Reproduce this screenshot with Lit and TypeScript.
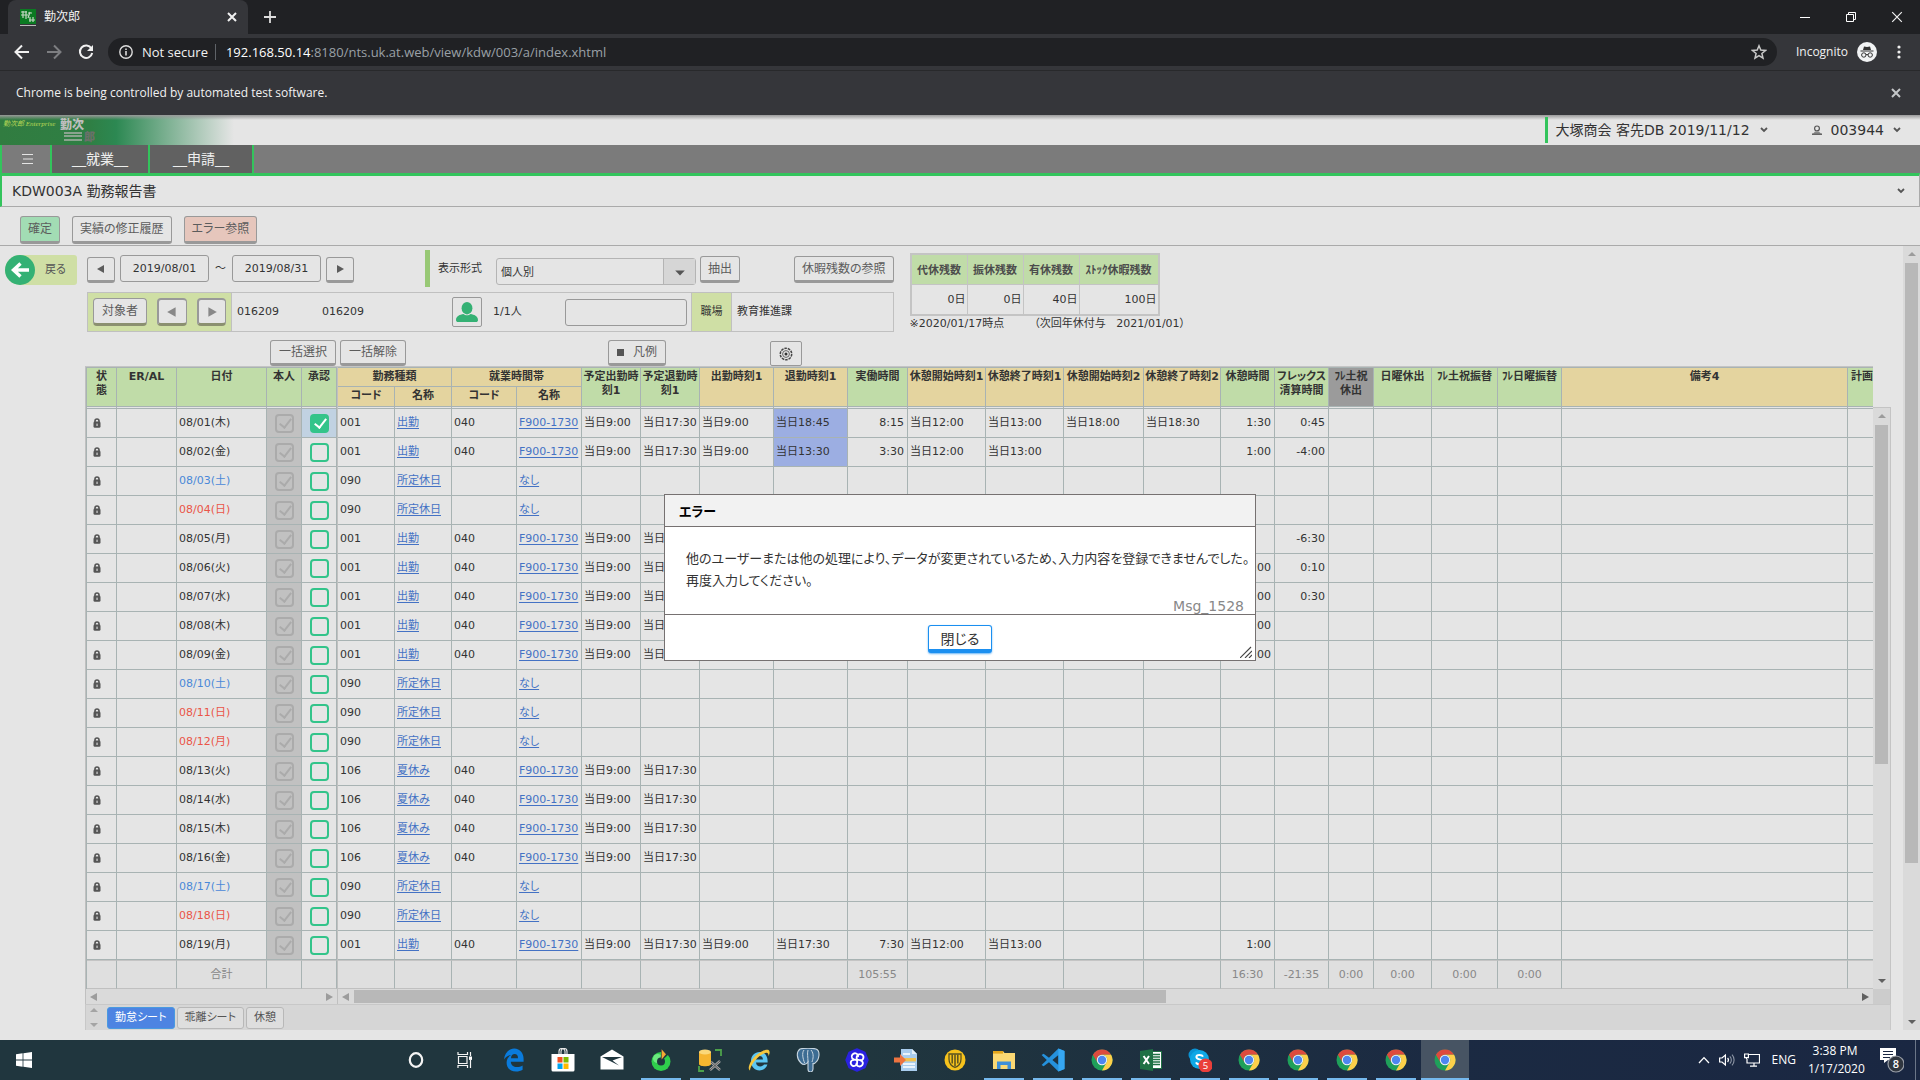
import { LitElement, html, css, svg, nothing } from "lit";
import { customElement } from "lit/decorators.js";
import { classMap } from "lit/directives/class-map.js";

type Col = { key: string; label: string; tone: "g" | "y" | "x"; align?: "r" };
type Day = { date: string; kind?: "sat" | "sun"; approved?: boolean; cells: Record<string, string> };

const PLAN: Col[] = [
  { key: "planIn", label: "予定出勤時刻1", tone: "g" },
  { key: "planOut", label: "予定退勤時刻1", tone: "g" },
  { key: "in1", label: "出勤時刻1", tone: "y" },
  { key: "out1", label: "退勤時刻1", tone: "y" },
  { key: "worked", label: "実働時間", tone: "g", align: "r" },
  { key: "bs1", label: "休憩開始時刻1", tone: "y" },
  { key: "be1", label: "休憩終了時刻1", tone: "y" },
  { key: "bs2", label: "休憩開始時刻2", tone: "y" },
  { key: "be2", label: "休憩終了時刻2", tone: "y" },
  { key: "brk", label: "休憩時間", tone: "g", align: "r" },
  { key: "flex", label: "フレックス清算時間", tone: "g", align: "r" },
  { key: "f1", label: "ﾌﾚ土祝休出", tone: "x" },
  { key: "f2", label: "日曜休出", tone: "g" },
  { key: "f3", label: "ﾌﾚ土祝振替", tone: "g" },
  { key: "f4", label: "ﾌﾚ日曜振替", tone: "g" },
  { key: "note", label: "備考4", tone: "y" },
  { key: "plan", label: "計画", tone: "g" },
];
/* Widths of the detail pane, code and name columns first. */
const WIDTHS = [57, 57, 65, 65, 59, 59, 74, 74, 60, 78, 78, 80, 77, 54, 54, 45, 58, 66, 64, 286, 60];

const TOTALS: Record<string, string> = {
  worked: "105:55", brk: "16:30", flex: "-21:35", f1: "0:00", f2: "0:00", f3: "0:00", f4: "0:00",
};

const work = (extra: Record<string, string> = {}) => ({
  code: "001", name: "出勤", zone: "040", zoneName: "F900-1730", planIn: "当日9:00", planOut: "当日17:30", ...extra,
});
const off = { code: "090", name: "所定休日", zoneName: "なし" };
const summer = { ...work(), code: "106", name: "夏休み" };

const DAYS: Day[] = [
  { date: "08/01(木)", approved: true, cells: work({ in1: "当日9:00", out1: "当日18:45", worked: "8:15", bs1: "当日12:00", be1: "当日13:00", bs2: "当日18:00", be2: "当日18:30", brk: "1:30", flex: "0:45" }) },
  { date: "08/02(金)", cells: work({ in1: "当日9:00", out1: "当日13:30", worked: "3:30", bs1: "当日12:00", be1: "当日13:00", brk: "1:00", flex: "-4:00" }) },
  { date: "08/03(土)", kind: "sat", cells: off },
  { date: "08/04(日)", kind: "sun", cells: off },
  { date: "08/05(月)", cells: work({ flex: "-6:30" }) },
  { date: "08/06(火)", cells: work({ brk: "1:00", flex: "0:10" }) },
  { date: "08/07(水)", cells: work({ brk: "1:00", flex: "0:30" }) },
  { date: "08/08(木)", cells: work({ brk: "1:00" }) },
  { date: "08/09(金)", cells: work({ brk: "1:00" }) },
  { date: "08/10(土)", kind: "sat", cells: off },
  { date: "08/11(日)", kind: "sun", cells: off },
  { date: "08/12(月)", kind: "sun", cells: off },
  { date: "08/13(火)", cells: summer },
  { date: "08/14(水)", cells: summer },
  { date: "08/15(木)", cells: summer },
  { date: "08/16(金)", cells: summer },
  { date: "08/17(土)", kind: "sat", cells: off },
  { date: "08/18(日)", kind: "sun", cells: off },
  { date: "08/19(月)", cells: work({ in1: "当日9:00", out1: "当日17:30", worked: "7:30", bs1: "当日12:00", be1: "当日13:00", brk: "1:00" }) },
];

const icon = (w: number, h: number, body: unknown, vb = `0 0 ${w} ${h}`) =>
  html`<svg class="ic" width=${w} height=${h} viewBox=${vb} aria-hidden="true">${body}</svg>`;

const cross = (s: number, sw = 2) =>
  icon(s, s, svg`<path d="M1 1L9 9M9 1L1 9" stroke="currentColor" stroke-width=${sw} fill="none"/>`, "0 0 10 10");
const chevron = () =>
  icon(8, 6, svg`<path d="M1 1L4 4L7 1" stroke="#555" stroke-width="1.8" fill="none"/>`);
const tri = (dir: string, s = 10, color = "currentColor") => {
  const d: Record<string, string> = {
    left: "M8 1V9L1 5Z", right: "M2 1V9L9 5Z", up: "M1 7H9L5 3Z", down: "M1 3H9L5 7Z",
  };
  return icon(s, s, svg`<path d=${d[dir]} fill=${color}/>`, "0 0 10 10");
};
const lock = () =>
  icon(8, 10, svg`<path d="M2 4V3a2 2 0 0 1 4 0v1" stroke="#555" stroke-width="1.6" fill="none"/><rect x="0.5" y="3.6" width="7" height="6.2" rx="1.4" fill="#555"/><rect x="3.4" y="5.6" width="1.3" height="2.4" fill="#ccc"/>`);

const chrome = svg`<circle cx="12" cy="12" r="10.5" fill="#1fa05a"/><path d="M2.9 6.75A10.5 10.5 0 0 1 21.1 6.75H12A5.25 5.25 0 0 0 7.45 14.6Z" fill="#dd4b3e"/><path d="M21.1 6.75A10.5 10.5 0 0 1 12 22.5L16.55 14.6A5.25 5.25 0 0 0 12 6.75Z" fill="#fdd04a"/><circle cx="12" cy="12" r="5.2" fill="#f4f4f4"/><circle cx="12" cy="12" r="4.2" fill="#4d86f0"/>`;

const TASKS: { name: string; art: unknown; open?: boolean; active?: boolean }[] = [
  { name: "Cortana", art: svg`<ellipse cx="12" cy="12" rx="6.2" ry="6.8" fill="none" stroke="#f4f4f4" stroke-width="2.2"/>` },
  { name: "Task View", art: svg`<path d="M5 4V6.5H14.5V4M5 20V17.5H14.5V20M5.5 8.5H14V15.5H5.5ZM17.5 4V8M17.5 12V20" fill="none" stroke="#f4f4f4" stroke-width="1.2"/><rect x="16" y="8.5" width="3" height="3.4" fill="#fff"/>` },
  { name: "Edge", art: svg`<path d="M2 11.5C2.6 5.5 6.6 .5 12.2 .5C18.3 .5 21.6 5.6 21.6 10.8V13.8H8.8C9 17.4 11.6 19 14.8 19C17 19 19 18.4 20.6 17.4V21.8C18.8 23 16.6 23.6 14 23.6C8 23.6 4.6 19.6 4.6 14.8C4.6 11.4 6.2 8.6 9 7C6 7.4 3.6 9 2 11.5ZM9 10.2H16C16 7.4 14.8 6 12.6 6C10.6 6 9.2 7.4 9 10.2Z" fill="#0a7bdc"/>` },
  { name: "Store", art: svg`<path d="M8 6.5V3.5A3 3 0 0 1 14 3.5V6.5M10 6.5V3.5A3 3 0 0 1 16 3.5V6.5" fill="none" stroke="#e8e8e8" stroke-width="1.1"/><path d="M0.5 6H23.5V22A1.5 1.5 0 0 1 22 23.5H2A1.5 1.5 0 0 1 .5 22Z" fill="#fff"/><rect x="6.5" y="9" width="5" height="5.5" fill="#f25022"/><rect x="12.5" y="9" width="5" height="5.5" fill="#7fba00"/><rect x="6.5" y="15.5" width="5" height="5.5" fill="#00a4ef"/><rect x="12.5" y="15.5" width="5" height="5.5" fill="#ffb900"/>` },
  { name: "Mail", art: svg`<path d="M0.5 8.5L12 1.5L23.5 8.5V21.5H.5Z" fill="#fff"/><path d="M2 9H22L12.5 12.5L19 17.5Z" fill="#20363e"/>` },
  { name: "Power agent", open: true, art: svg`<circle cx="12" cy="13.5" r="9.5" fill="#2fcf4c"/><circle cx="8.6" cy="10.6" r="4.6" fill="#86f296" opacity=".7"/><circle cx="12" cy="13.5" r="4" fill="#20363e"/><path d="M11.4 14L12.4 2L20.5 5.5Z" fill="#20363e"/><path d="M12.6 11.5V1.2L17 6.2Z" fill="#f5a934"/>` },
  { name: "Database tool", open: true, art: svg`<path d="M1 4V16C1 19 13 19 13 16V4Z" fill="#f6b52f"/><ellipse cx="7" cy="4" rx="6" ry="2.4" fill="#fbd878"/><path d="M17 2H23V8M1 18V23H6" stroke="#4da24b" stroke-width="1.8" fill="none"/><path d="M12 22L22 13M13 14L22 22" stroke="#a8a8a8" stroke-width="2.4"/><path d="M12 22L22 13M13 14L22 22" stroke="#555" stroke-width="1"/>` },
  { name: "Internet Explorer", art: svg`<path d="M4 13C4 7.6 7.8 4 12.6 4C17.6 4 20.6 8 20.6 13V14.4H9C9.2 17 11 18.4 13.4 18.4C15 18.4 16.2 17.8 17 16.6H20.4C19.2 20.4 16.4 22.4 12.6 22.4C7.6 22.4 4 18.8 4 13ZM9 11.4H16C15.8 9.2 14.6 8 12.6 8C10.6 8 9.2 9.2 9 11.4Z" fill="#5cc6f2"/><path d="M3 22.5C-1 20 5 9 13 4.4C17.6 1.6 22.4 .6 22.6 4C22.8 5.4 22 7.2 21.4 8.2C21.8 5.4 20.6 4 17 5.4C10.4 8 3 17.6 3 22.5Z" fill="#f5c63c"/>` },
  { name: "PostgreSQL", art: svg`<path d="M4 1C8 -.2 16 -.2 20 1C25 3 23 12 19.4 14.6C18 16 17.4 16 17 15V21C16.6 25 12 25 12 21V14C10 17 7 17 5 15C.6 11 0 4 4 1Z" fill="#3d6c93" stroke="#c8d6e0" stroke-width="1.1"/><path d="M8 2C5.6 5 7 11 8.6 15M15 2C18.4 6 17 11 16 14M12 14C12 9 11 6 12 2" stroke="#c8d6e0" stroke-width="1" fill="none"/>` },
  { name: "Swirl", art: svg`<path d="M12 1L20 4.5L23 12L20 19.5L12 23L4 19.5L1 12L4 4.5Z" fill="#2a22e0" stroke="#2a22e0" stroke-width="1.4" stroke-linejoin="round"/><g fill="none" stroke="#fff" stroke-width="1.8"><path d="M12 12C7 12 5.6 9 7.4 6.6C9.6 4 13.6 5.4 13 9"/><path d="M12 12C10.6 7.4 14 5 17 6.6C19.6 8.4 18.6 12.4 15 12.4"/><path d="M12 12C17 11.4 19 14.6 17.2 17.2C15 19.6 11 18.4 11.6 14.8"/><path d="M12 12C13 17 10 19 7.2 17.6C4.6 15.6 5.6 11.6 9.2 11.8"/></g>` },
  { name: "Export", art: svg`<path d="M7 1H18L23 6V23H7Z" fill="#a9cdee"/><path d="M18 1V6H23Z" fill="#e6f1fa"/><path d="M9 16H21M9 19H21M9 6H16" stroke="#fff" stroke-width="1.4"/><rect x="9" y="10" width="13" height="3.4" fill="#f2c14d"/><path d="M0 9.5H6V6L12 12L6 18V14.5H0Z" fill="#ee7440"/>` },
  { name: "Shield", art: svg`<circle cx="12" cy="12" r="10.5" fill="#f6c21c"/><path d="M6 6H18V11C18 15 16 18 12 19.5C8 18 6 15 6 11Z" fill="#f6c21c" stroke="#5a5220" stroke-width="1.3"/><path d="M9.2 6.5V15.6M12 6.5V18.6M14.8 6.5V15.6" stroke="#5a5220" stroke-width="1.5"/>` },
  { name: "Explorer", open: true, art: svg`<path d="M1 3H11L12.5 5H23V21H1Z" fill="#fbd873"/><path d="M1 3H11V5.6H1Z" fill="#e3a51c"/><path d="M5 21V13.5H19V21H15.5V17H8.5V21Z" fill="#3f8fd8"/>` },
  { name: "VS Code", open: true, art: svg`<path d="M17.4 .5L23.5 3V21L17.4 23.5L8 14.2L2.6 18.2L.6 17L5.8 12L.6 7L2.6 5.8L8 9.8ZM17.4 7L11.4 12L17.4 17Z" fill="#2591dc" fill-rule="evenodd"/><path d="M17.4 .5L23.5 3V21L17.4 23.5Z" fill="#36a7f2"/>` },
  { name: "Chrome", open: true, art: chrome },
  { name: "Excel", open: true, art: svg`<rect x="11" y="3.5" width="11.5" height="17" fill="#fff" stroke="#1f7145"/><path d="M14 6.5H21M14 9H21M14 11.5H21M14 14H21M14 16.5H21" stroke="#1f7145" stroke-width="1.3"/><path d="M1 3L14 1V23L1 21Z" fill="#1f7145"/><path d="M4.6 8L10 16M10 8L4.6 16" stroke="#fff" stroke-width="2"/>` },
  { name: "Skype", open: true, art: svg`<circle cx="7" cy="7" r="6.5" fill="#0a93d4"/><circle cx="11.5" cy="11.5" r="9.5" fill="#0fa8e6"/><path d="M15 8.6C14 6.4 8.4 6.2 8.4 9C8.4 12 15 10.8 15 14.2C15 17 9 17 8 14.4" fill="none" stroke="#fff" stroke-width="2"/><circle cx="17.5" cy="17.5" r="7" fill="#ea3f3a"/><text x="17.5" y="21" font-size="9.5" fill="#fff" text-anchor="middle" font-family="Open Sans, sans-serif">5</text>` },
  { name: "Chrome", open: true, art: chrome },
  { name: "Chrome", open: true, art: chrome },
  { name: "Chrome", open: true, art: chrome },
  { name: "Chrome", open: true, art: chrome },
  { name: "Chrome", open: true, active: true, art: chrome },
];

@customElement("app-root")
export class AppRoot extends LitElement {
  static styles = css`
    :host { display: block; }
    * { box-sizing: border-box; }
    .app {
      position: relative; display: flex; flex-direction: column; min-height: 100vh; overflow: hidden;
      background: #e5e5e5; color: #333; font: 11px/14px "DejaVu Sans", "Noto Sans CJK JP", sans-serif;
      font-feature-settings: "palt";
    }
    button, input, select { font: inherit; color: inherit; margin: 0; padding: 0; font-feature-settings: inherit; }
    button { background: none; border: 0; }
    .ic { display: block; flex: none; }
    .row { display: flex; align-items: center; }
    .grow { flex: 1; min-width: 0; }

    /* browser frame */
    .frame { color: #f1f1f1; font: 12px/16px "Open Sans", "Noto Sans CJK JP", sans-serif; background: #35363a; }
    .tabs { height: 34px; background: #202124; padding-left: 8px; }
    .tab { width: 240px; height: 34px; padding: 0 11px 0 12px; gap: 8px; background: #35363a; border-radius: 8px 8px 0 0; }
    .plus { margin: 0 auto 0 16px; }
    .wc { width: 46px; height: 28px; display: grid; place-items: center; }
    .bar { height: 37px; border-bottom: 1px solid #28292b; padding: 0 19px 0 14px; }
    .nav { display: flex; gap: 16px; margin-right: 14px; }
    .omni { flex: 1; height: 28px; border-radius: 14px; background: #202124; padding: 0 10px 0 11px; display: flex; align-items: center; gap: 10px; }
    .secure { padding-right: 7px; border-right: 1px solid #5f6368; font-size: 13px; display: flex; gap: 9px; align-items: center; }
    .url { flex: 1; font-size: 13px; color: #9aa0a6; white-space: nowrap; }
    .url b { font-weight: 400; color: #fff; }
    .incog { gap: 9px; margin-left: 19px; }
    .dots { margin-left: 20px; }
    .info { height: 44px; padding: 0 19px 0 16px; justify-content: space-between; }
    .muted { color: #c4c6c8; }

    /* product header */
    .head { height: 30px; background: linear-gradient(#999, #e5e5e500 5px), linear-gradient(90deg, #317c40 0, #2f7f44 90px, #2c8852 116px, #e5e5e5 234px); justify-content: space-between; padding-right: 19px; font-size: 14px; }
    .company { border-left: 3px solid #33c45c; height: 26px; padding-left: 8px; margin-right: 44px; gap: 10px; }
    .user { gap: 9px; }
    .menu { height: 28px; background: #7b7b7b; border-left: 2px solid #33c45c; font-size: 14px; color: #eee; }
    .menu a { height: 28px; line-height: 28px; padding: 0 20px; color: inherit; text-decoration: none; background: #616161; border-right: 2px solid #33c45c; }
    .menu a.wide { padding: 0 23px; }
    .menu button { width: 50px; height: 28px; padding-left: 4px; border-right: 2px solid #33c45c; display: grid; place-items: center; }
    .title { height: 34px; border: 1px solid #aaa; border-top: 3px solid #33c45c; border-left: 2px solid #33c45c; padding: 0 14px 0 10px; justify-content: space-between; }
    .title h1 { margin: 0; font-size: 14px; font-weight: 400; }
    .tools { height: 39px; border-bottom: 1px solid #aaa; padding: 8px 20px 0; gap: 12px; }

    .btn { border: 1px solid #999; border-bottom-width: 3px; border-radius: 3px; background: #e5e5e5; color: #5c5c5c; font-size: 12px; height: 27px; padding: 0 7px; line-height: 20px; white-space: nowrap; display: flex; align-items: center; justify-content: center; }
    .tools .btn { height: 28px; }
    .ok { background: #a2dcb4; }
    .err { background: #e6c6bc; }

    /* work area */
    .work { flex: 1; display: flex; padding-bottom: 10px; }
    .back { flex: none; width: 72px; height: 30px; margin: 9px 8px 0 5px; padding: 0; display: flex; align-items: center; gap: 10px; background: #cfdfa5; border-radius: 15px 3px 3px 15px; font-size: 11px; color: #555; }
    .main { flex: 1; min-width: 0; margin-right: 12px; }
    .top { display: flex; align-items: flex-start; gap: 16px; padding-left: 2px; }
    .filters { padding-top: 4px; flex: none; }
    .line1 { height: 37px; }
    .line1 .btn { margin-top: 2px; }
    .line1 .sq { width: 28px; height: 26px; padding: 0; }
    .date { width: 89px; height: 27px; border: 1px solid #999; border-radius: 3px; background: #e5e5e5; text-align: center; margin: 0 5px; }
    .tilde { padding: 0 1px; }
    .mark { width: 5px; height: 37px; background: #98c875; margin: 0 8px 0 71px; }
    .combo { margin: 5px 4px 0 14px; width: 200px; height: 27px; border: 1px solid #b4b4b4; border-radius: 3px; display: flex; }
    .combo select { appearance: none; flex: 1; background: none; border: 0; padding: 3px 0 0 4px; outline: none; }
    .combo span { width: 32px; display: grid; place-items: center; padding-top: 4px; border-left: 1px solid #b4b4b4; background: #d6d6d6; color: #555; }
    .rest { margin-left: 54px; }
    .person { margin-top: 5px; height: 40px; border: 1px solid #c0c0c0; }
    .pick { height: 38px; background: #cfdfa5; border-right: 1px solid #c0c0c0; padding: 0 5px; gap: 10px; width: 144px; }
    .pick .btn { border-bottom-color: #8b9070; border-radius: 4px; height: 28px; }
    .pick .first { padding: 0 8px; }
    .pick .sq { width: 30px; padding: 0; color: #888; border-width: 2px 1px 3px 2px; }
    .code { width: 85px; padding-left: 5px; }
    .code.second { width: 135px; }
    .face { width: 30px; height: 30px; border: 1px solid #999; border-radius: 2px; display: grid; place-items: center; }
    .count { width: 83px; padding-left: 11px; }
    .find { width: 122px; height: 27px; border: 1px solid #999; border-radius: 3px; background: #e5e5e5; }
    .dept { height: 38px; line-height: 38px; width: 41px; text-align: center; margin-left: 4px; background: #cfdfa5; border: solid #c0c0c0; border-width: 0 1px; }
    .deptname { padding-left: 5px; }
    .remain { margin-top: 7px; }
    .remain table { border: 2px solid #c4c4c4; border-spacing: 0; }
    .remain th, .remain td { height: 29px; padding: 0; width: 56px; border-right: 1px solid #c4c4c4; }
    .remain th { height: 30px; padding-top: 2px; background: #c0dca8; color: #4c4c4c; border-bottom: 1px solid #c4c4c4; }
    .remain td { text-align: right; padding-right: 1px; }
    .remain th:last-child, .remain td:last-child { width: 78px; border-right: 0; }
    .remain p { margin: 1px 0 0; display: flex; gap: 30px; white-space: pre; }
    .acts { margin-top: 8px; padding-left: 185px; gap: 4px; align-items: flex-end; height: 26px; }
    .acts .btn { height: 26px; padding: 0 8px; }
    .acts .legend { margin-left: 198px; gap: 9px; }
    .acts .gear { margin-left: 100px; width: 32px; height: 25px; border-bottom-width: 1px; border-radius: 2px; }

    /* attendance sheet */
    .sheet { display: grid; grid-template-columns: 252px minmax(0, 1fr) 18px; }
    .pane { overflow: hidden; border-top: 1px solid #c4c4c4; border-left: 1px solid #c0c0c0; }
    .pane table { table-layout: fixed; border-spacing: 0; }
    .pane.fix table { border-left: 1px solid #a8b3b3; width: 251px; }
    .pane th, .pane td { padding: 0; border-right: 1px solid #a8b3b3; border-bottom: 1px solid #a8b3b3; height: 29px; overflow: hidden; white-space: nowrap; }
    .pane thead tr:first-child th { border-top: 1px solid #a8b3b3; height: 20px; }
    .pane thead tr:last-child th { height: 22px; }
    .pane.fix thead tr th { height: 42px; border-bottom: 3px double #a8b3b3; padding-top: 2px; }
    .pane thead th { vertical-align: top; padding-top: 2px; white-space: normal; background: #c0dca8; background-clip: padding-box; }
    .pane thead th[rowspan], .pane thead tr:last-child th { border-bottom: 3px double #a8b3b3; }
    .pane thead th.y { background-color: #e4d49f; }
    .pane thead th.x { background-color: #9b9b9b; }
    .pane thead th.plan { text-align: left; padding-left: 3px; }
    .pane tbody td { padding: 0 2px; }
    .pane tbody td.r { text-align: right; padding-right: 3px; }
    .pane tbody td.mid { text-align: center; padding: 0; }
    .pane td.lock { padding-left: 6px; }
    .pane td.self { background: #c1c1c1; }
    .pane td.on { background: #c1d2e2; }
    .pane td.hit { background: #9caee2; }
    .pane td.sat { color: #4a88d8; }
    .pane td.sun { color: #ea5548; }
    .pane td a { color: #4472c4; text-underline-offset: 2px; }
    .pane tfoot td { border-top: 1px solid #c4c4c4; border-bottom-color: #c0c0c0; background: #dfdfdf; text-align: center; color: #888; }
    .ck { appearance: none; display: block; width: 19px; height: 19px; margin: 0 auto; border: 2px solid #33c48a; border-radius: 4px; position: relative; }
    .ck:disabled { border-color: #ababab; }
    .ck:checked::before { content: ""; position: absolute; left: 5px; top: 0; width: 5px; height: 10px; border: solid #ababab; border-width: 0 2px 2px 0; transform: rotate(38deg); }
    .ck.green:checked { background: #33c48a; }
    .ck.green:checked::before { border-color: #fff; }
    .sb { background: #dadada; color: #9c9c9c; display: flex; align-items: center; }
    .sb .thumb { background: #b8b8b8; }
    .sb.v { flex-direction: column; padding: 3px 2px; }
    .sb.v .thumb { width: 13px; }
    .sb .track { flex: 1; display: flex; }
    .sb.v .track { flex-direction: column; align-items: center; margin: 4px 0; }
    .sb.h { height: 15px; padding: 0 3px; border-left: 1px solid #c0c0c0; }
    .sb.h .thumb { height: 13px; }
    .sb.h .track { margin: 0 3px; }
    .gridbar { margin-top: 41px; border: 1px solid #c4c4c4; border-width: 1px 1px 0 0; }
    .corner { background: #ccc; border-right: 1px solid #c4c4c4; }
    .sheets { height: 26px; border: solid #c8c8c8; border-width: 1px 1px 0; background: #d6d6d6; gap: 2px; }
    .spin { width: 19px; padding-left: 3px; display: flex; flex-direction: column; justify-content: space-between; height: 25px; color: #a4a4a4; }
    .sheets .tabbtn { height: 22px; padding: 0 7px; border: 1px solid #b8b8b8; border-radius: 3px; background: #dedede; color: #555; line-height: 18px; white-space: nowrap; }
    .sheets .tabbtn.cur { background: #4d84e2; color: #fff; border-color: #4a9ae0; }

    /* message box */
    .dlg { position: absolute; top: 494px; left: 0; right: 0; margin: 0 auto; width: 592px; background: #fff; border: 1px solid #767171; color: #333; }
    .dlg h2 { margin: 0; height: 32px; line-height: 34px; padding-left: 14px; background: #f2f2f2; border-bottom: 1px solid #767171; font-size: 13px; color: #000; }
    .dlg .msg { height: 88px; padding: 21px 11px 0 21px; border-bottom: 1px solid #767171; font-size: 13px; line-height: 22px; white-space: nowrap; }
    .dlg p { margin: 0; }
    .dlg .id { color: #888; font-size: 14px; line-height: 22px; text-align: right; margin-top: 3px; }
    .dlg footer { height: 45px; position: relative; display: flex; justify-content: center; padding-top: 10px; }
    .close { width: 64px; height: 28px; border: 1px solid #1b8ff0; border-bottom-width: 4px; border-radius: 3px; background: #fff; font-size: 14px; line-height: 22px; padding-top: 2px; box-shadow: 0 1px 2px #1b8ff0aa; }
    .grip { position: absolute; right: 3px; bottom: 2px; }

    /* taskbar */
    .task { height: 40px; background: linear-gradient(90deg, #20363e 0, #20363e 45%, #1b2a42 75%, #1a2742); color: #fff; font: 12px/18px "Open Sans", sans-serif; }
    .task button { height: 40px; display: grid; place-items: center; }
    .start { width: 48px; margin-right: 344px; }
    .apps { display: flex; gap: 1px; flex: 1; }
    .apps button { width: 48px; border: solid transparent; border-width: 2px 0; }
    .apps .open { background: linear-gradient(#76b9ed, #76b9ed) 50% 100% / 40px 2px no-repeat border-box; }
    .apps .active { background: linear-gradient(#76b9ed, #76b9ed) 0 100% / 48px 2px no-repeat border-box, #475463 border-box; }
    .tray { gap: 12px; padding-right: 4px; }
    .status { display: flex; align-items: center; gap: 9px; }
    .clock { text-align: center; width: 54px; }
    .note { margin-left: 6px; padding-right: 11px; border-right: 1px solid #6b7688; }
  `;

  private bar(dir: "v" | "h", size: number, cls = "", first = "#9c9c9c", last = "#606060") {
    const [a, b] = dir === "v" ? ["up", "down"] : ["left", "right"];
    const style = dir === "v" ? `height:${size}%` : `width:${size}%`;
    return html`<div class="sb ${dir} ${cls}">${tri(a, 10, first)}
      <div class="track">${size ? html`<div class="thumb" style=${style}></div>` : nothing}</div>${tri(b, 10, last)}</div>`;
  }

  private frame() {
    return html`<div class="frame">
      <div class="row tabs">
        <div class="row tab">
          ${icon(16, 17, svg`<rect width="16" height="15" fill="#0b7a22"/><path d="M1 3h6M1 6h7M3 2v7M6 2v8M8 4h4M10 3l-2 6M9 11h6M10 8v5M13 8v5" stroke="#c4d8c4" stroke-width="1.2" fill="none"/><rect y="16" width="16" height="1" fill="#bbb"/>`)}
          <span class="grow">勤次郎</span><button aria-label="Close tab">${cross(10)}</button>
        </div>
        <button class="plus" aria-label="New tab">${icon(12, 12, svg`<path d="M6 0V12M0 6H12" stroke="#ddd" stroke-width="1.8"/>`)}</button>
        <button class="wc" aria-label="Minimize">${icon(10, 10, svg`<path d="M0 5.5H10" stroke="#fff"/>`)}</button>
        <button class="wc" aria-label="Restore">${icon(10, 10, svg`<path d="M.5 2.5H7.5V9.5H.5ZM2.5 2.5V.5H9.5V7.5H7.5" fill="none" stroke="#fff"/>`)}</button>
        <button class="wc" aria-label="Close window">${cross(12, 1)}</button>
      </div>
      <div class="row bar">
        <div class="nav">
          <button aria-label="Back">${icon(16, 16, svg`<path d="M15 8H2M8 1.5L1.5 8L8 14.5" stroke="#f1f1f1" stroke-width="2" fill="none"/>`)}</button>
          <button aria-label="Forward">${icon(16, 16, svg`<path d="M1 8H14M8 1.5L14.5 8L8 14.5" stroke="#7d7e81" stroke-width="2" fill="none"/>`)}</button>
          <button aria-label="Reload">${icon(16, 16, svg`<path d="M13.4 4.4A6.2 6.2 0 1 0 14.2 9" stroke="#f1f1f1" stroke-width="2" fill="none"/><path d="M15 1V7H9Z" fill="#f1f1f1"/>`)}</button>
        </div>
        <div class="omni">
          <span class="secure">${icon(14, 14, svg`<circle cx="7" cy="7" r="6.2" fill="none" stroke="#ddd" stroke-width="1.4"/><path d="M7 6V10.5M7 3.5V5" stroke="#ddd" stroke-width="1.6"/>`)}Not secure</span>
          <span class="url"><b>192.168.50.14</b>:8180/nts.uk.at.web/view/kdw/003/a/index.xhtml</span>
          <button aria-label="Bookmark">${icon(16, 16, svg`<path d="M8 1.8L9.8 6.1L14.5 6.5L10.9 9.5L12 14.1L8 11.6L4 14.1L5.1 9.5L1.5 6.5L6.2 6.1Z" fill="none" stroke="#c8c8c8" stroke-width="1.5"/>`)}</button>
        </div>
        <div class="row incog">Incognito
          ${icon(20, 20, svg`<circle cx="10" cy="10" r="10" fill="#f1f3f4"/><path d="M7 4.4L10 5L13 4.4L14 8H6ZM3.5 8.4H16.5V9.4H3.5Z" fill="#333"/><circle cx="6.8" cy="13" r="2.2" fill="none" stroke="#333"/><circle cx="13.2" cy="13" r="2.2" fill="none" stroke="#333"/><path d="M9 12.6H11" stroke="#333"/>`)}</div>
        <button class="dots" aria-label="Menu">${icon(4, 14, svg`<circle cx="2" cy="2" r="1.6" fill="#eee"/><circle cx="2" cy="7" r="1.6" fill="#eee"/><circle cx="2" cy="12" r="1.6" fill="#eee"/>`)}</button>
      </div>
      <div class="row info"><span>Chrome is being controlled by automated test software.</span>
        <button class="muted" aria-label="Dismiss">${cross(10)}</button></div>
    </div>`;
  }

  private header() {
    return html`
      <header class="row head">
        ${icon(100, 30, svg`<text x="3" y="11" font-size="7" font-style="italic" fill="#b9d957" font-family="Liberation Serif, Noto Sans CJK JP, serif">勤次郎 Enterprise</text>
          <g font-family="Noto Sans CJK JP, sans-serif" font-weight="900"><text x="60" y="14" font-size="12" fill="#bdbdbd">勤次</text><text x="84" y="26" font-size="11" fill="#6a706a">郎</text></g>
          <path d="M64 18h18M64 21h18M64 25h18" stroke="#a8b0a8" stroke-width="1.6"/>`)}
        <div class="row">
          <div class="row company"><span>大塚商会 客先DB 2019/11/12</span>${chevron()}</div>
          <div class="row user">
            ${icon(10, 10, svg`<circle cx="5" cy="3.4" r="2.4" fill="none" stroke="#555" stroke-width="1.2"/><path d="M3 6.5L1 8.8H9L7 6.5" fill="#888"/><path d="M0 9.2H10" stroke="#555" stroke-width="1.4"/>`)}
            <span>003944</span>${chevron()}</div>
        </div>
      </header>
      <nav class="row menu">
        <button aria-label="メニュー">${icon(12, 12, svg`<path d="M0 1.5H11M1 6H11M0 10.5H11" stroke="#e4e4e4" stroke-width="1.1"/>`)}</button>
        <a href="#">__就業__</a><a class="wide" href="#">__申請__</a>
      </nav>
      <div class="row title"><h1>KDW003A 勤務報告書</h1>${chevron()}</div>
      <div class="row tools">
        <button class="btn ok">確定</button><button class="btn">実績の修正履歴</button><button class="btn err">エラー参照</button>
      </div>`;
  }

  private filters() {
    return html`<div class="top">
      <div class="filters">
        <div class="row line1">
          <button class="btn sq" aria-label="前の期間">${tri("left")}</button>
          <input class="date" aria-label="開始日" value="2019/08/01"><span class="tilde">～</span><input class="date" aria-label="終了日" value="2019/08/31">
          <button class="btn sq" aria-label="次の期間">${tri("right")}</button>
          <i class="mark"></i><label for="fmt">表示形式</label>
          <div class="combo"><select id="fmt"><option>個人別</option></select><span>${tri("down", 12)}</span></div>
          <button class="btn">抽出</button><button class="btn rest">休暇残数の参照</button>
        </div>
        <div class="row person">
          <div class="row pick"><button class="btn first">対象者</button>
            <button class="btn sq" aria-label="前の対象者">${tri("left", 12)}</button>
            <button class="btn sq" aria-label="次の対象者">${tri("right", 12)}</button></div>
          <span class="code">016209</span><span class="code second">016209</span>
          <button class="face" aria-label="社員情報">${icon(22, 20, svg`<ellipse cx="11" cy="6.2" rx="5.4" ry="6.2" fill="#34b174"/><path d="M0 18C0 14 4 12.6 7.4 12C9.4 13.8 12.6 13.8 14.6 12C18 12.6 22 14 22 18C22 19.4 21 20 20 20H2C1 20 0 19.4 0 18Z" fill="#34b174"/>`)}</button>
          <span class="count">1/1人</span>
          <input class="find" aria-label="社員検索">
          <span class="dept">職場</span><span class="deptname">教育推進課</span>
        </div>
      </div>
      <div class="remain">
        <table><thead><tr><th>代休残数</th><th>振休残数</th><th>有休残数</th><th>ｽﾄｯｸ休暇残数</th></tr></thead>
          <tbody><tr><td>0日</td><td>0日</td><td>40日</td><td>100日</td></tr></tbody></table>
        <p><span>※2020/01/17時点</span><span>（次回年休付与   2021/01/01）</span></p>
      </div>
    </div>
    <div class="row acts">
      <button class="btn">一括選択</button><button class="btn">一括解除</button>
      <button class="btn legend">${icon(7, 7, svg`<rect width="7" height="7" fill="#555"/>`)}凡例</button>
      <button class="btn gear" aria-label="設定">${icon(14, 14, svg`<circle cx="7" cy="7" r="5.7" fill="none" stroke="#444" stroke-width="1.5" stroke-dasharray="2.6 .9"/><circle cx="7" cy="7" r="3.4" fill="none" stroke="#666" stroke-width="1"/><circle cx="7" cy="7" r="1.5" fill="#333"/>`)}</button>
    </div>`;
  }

  private fixedPane() {
    return html`<div class="pane fix"><table>
      <colgroup><col style="width:30px"><col style="width:60px"><col style="width:90px"><col style="width:35px"><col style="width:35px"></colgroup>
      <thead><tr><th>状<br>態</th><th>ER/AL</th><th>日付</th><th>本人</th><th>承認</th></tr></thead>
      <tbody>${DAYS.map((d) => html`<tr>
        <td class="lock">${lock()}</td><td></td><td class=${d.kind ?? ""}>${d.date}</td>
        <td class="mid self"><input class="ck" type="checkbox" checked disabled aria-label="本人 ${d.date}"></td>
        <td class=${classMap({ mid: true, on: !!d.approved })}><input class="ck green" type="checkbox" ?checked=${d.approved} aria-label="承認 ${d.date}"></td>
      </tr>`)}</tbody>
      <tfoot><tr><td></td><td></td><td>合計</td><td></td><td></td></tr></tfoot>
    </table></div>`;
  }

  private detailPane() {
    const total = WIDTHS.reduce((a, b) => a + b, 0);
    return html`<div class="pane"><table style="width:${total}px">
      <colgroup>${WIDTHS.map((w) => html`<col style="width:${w}px">`)}</colgroup>
      <thead>
        <tr><th class="y" colspan="2">勤務種類</th><th class="y" colspan="2">就業時間帯</th>
          ${PLAN.map((c) => html`<th rowspan="2" class="${c.tone} ${c.key}">${c.key === "flex" ? html`フレックス<br>清算時間` : c.key === "f1" ? html`ﾌﾚ土祝<br>休出` : c.label}</th>`)}</tr>
        <tr><th class="y">コード</th><th class="y">名称</th><th class="y">コード</th><th class="y">名称</th></tr>
      </thead>
      <tbody>${DAYS.map((d, i) => html`<tr>
        <td>${d.cells.code}</td><td><a href="#">${d.cells.name}</a></td>
        <td>${d.cells.zone}</td><td><a href="#">${d.cells.zoneName}</a></td>
        ${PLAN.map((c) => html`<td class=${classMap({ r: c.align === "r", hit: c.key === "out1" && i < 2 })}>${d.cells[c.key] ?? ""}</td>`)}
      </tr>`)}</tbody>
      <tfoot><tr><td></td><td></td><td></td><td></td>${PLAN.map((c) => html`<td>${TOTALS[c.key] ?? ""}</td>`)}</tr></tfoot>
    </table></div>`;
  }

  private dialog() {
    return html`<section class="dlg" role="dialog" aria-label="エラー">
      <h2>エラー</h2>
      <div class="msg"><p>他のユーザーまたは他の処理により、データが変更されているため、入力内容を登録できませんでした。</p>
        <p>再度入力してください。</p><p class="id">Msg_1528</p></div>
      <footer><button class="close">閉じる</button>
        <span class="grip">${icon(12, 12, svg`<path d="M0 12L11 1M5 12L12 5M9 12L12 9" stroke="#444" stroke-width="1.1"/>`)}</span></footer>
    </section>`;
  }

  private taskbar() {
    return html`<div class="row task">
      <button class="start" aria-label="Start">${icon(16, 16, svg`<path d="M0 2.2L6.6 1.3V7.6H0ZM7.4 1.2L16 0V7.6H7.4ZM0 8.4H6.6V14.7L0 13.8ZM7.4 8.4H16V16L7.4 14.8Z" fill="#fff"/>`)}</button>
      <div class="apps">${TASKS.map((t) => html`<button aria-label=${t.name} class=${classMap({ open: !!t.open, active: !!t.active })}>
        ${icon(24, 24, t.art)}</button>`)}</div>
      <div class="row tray">
        <div class="status">
          ${icon(12, 8, svg`<path d="M1 7L6 1.6L11 7" stroke="#fff" stroke-width="1.3" fill="none"/>`)}
          ${icon(16, 14, svg`<path d="M.6 5H3L6.4 2V12L3 9H.6Z" fill="none" stroke="#fff" stroke-width="1.2"/><path d="M8.6 5A3 3 0 0 1 8.6 9" stroke="#fff" stroke-width="1.2" fill="none"/><path d="M10.8 3.4A5 5 0 0 1 10.8 10.6M13 1.6A8 8 0 0 1 13 12.4" stroke="#8c95a4" stroke-width="1.1" fill="none"/>`)}
          ${icon(16, 14, svg`<path d="M5 1.5H15.5V10H3V6M10 10V13M6 13.2H13M.6 1H4.4V4.6H.6ZM2.5 4.6V6" stroke="#fff" stroke-width="1.2" fill="none"/>`)}
        </div>
        <span>ENG</span>
        <span class="clock">3:38 PM<br>1/17/2020</span>
        <button class="note" aria-label="Notifications">${icon(24, 26, svg`<path d="M0 1H16V13H8L4 16V13H0Z" fill="#fff"/><path d="M3 4.5H13M3 7.5H13M3 10.5H10" stroke="#1a2742" stroke-width="1.1"/><circle cx="16" cy="17" r="8" fill="#30363f" stroke="#9a9fa8" stroke-width="1.2"/><text x="16" y="21" text-anchor="middle" font-size="11" font-weight="600" fill="#fff" font-family="Open Sans, sans-serif">8</text>`)}</button>
      </div>
    </div>`;
  }

  render() {
    return html`<div class="app">
      ${this.frame()}${this.header()}
      <div class="work">
        <button class="back">${icon(30, 30, svg`<circle cx="15" cy="15" r="15" fill="#34b174"/><path d="M24 15H9M15.5 8.5L8.5 15L15.5 21.5" stroke="#fff" stroke-width="3.4" fill="none"/>`)}戻る</button>
        <div class="main">
          ${this.filters()}
          <div class="sheet">
            ${this.fixedPane()}${this.detailPane()}${this.bar("v", 62, "gridbar")}
            ${this.bar("h", 0, "", "#9c9c9c", "#9c9c9c")}${this.bar("h", 54)}<div class="corner"></div>
          </div>
          <div class="row sheets">
            <div class="spin">${tri("up", 10)}${tri("down", 10)}</div>
            <button class="tabbtn cur">勤怠シート</button><button class="tabbtn">乖離シート</button><button class="tabbtn">休憩</button>
          </div>
        </div>
        ${this.bar("v", 80)}
      </div>
      ${this.taskbar()}${this.dialog()}
    </div>`;
  }
}
